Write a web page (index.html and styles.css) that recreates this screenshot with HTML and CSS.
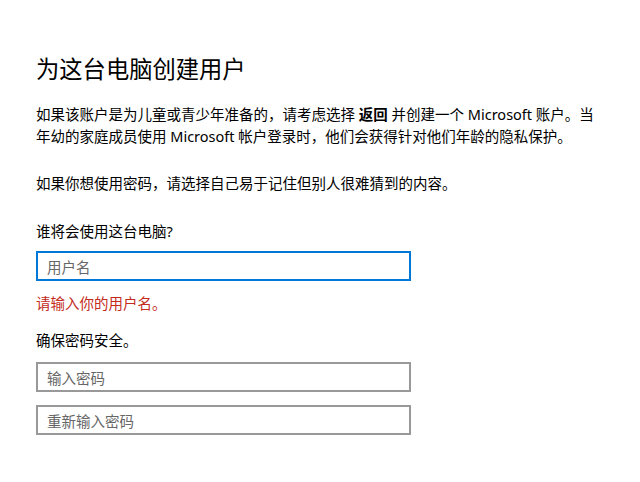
FILE: index.html
```html
<!DOCTYPE html>
<html lang="zh-CN">
<head>
<meta charset="utf-8">
<title>为这台电脑创建用户</title>
<link rel="stylesheet" href="styles.css">
</head>
<body>
<main class="page">
  <h1 class="title">为这台电脑创建用户</h1>
  <p class="text intro">如果该账户是为儿童或青少年准备的，请考虑选择 <b>返回</b> 并创建一个 Microsoft 账户。当年幼的家庭成员使用 Microsoft 帐户登录时，他们会获得针对他们年龄的隐私保护。</p>
  <p class="text hint">如果你想使用密码，请选择自己易于记住但别人很难猜到的内容。</p>
  <p class="text label">谁将会使用这台电脑?</p>
  <div class="field field-active"><span class="placeholder">用户名</span></div>
  <p class="text error">请输入你的用户名。</p>
  <p class="text label2">确保密码安全。</p>
  <div class="field field-pw"><span class="placeholder">输入密码</span></div>
  <div class="field field-pw2"><span class="placeholder">重新输入密码</span></div>
</main>
</body>
</html>
```

FILE: styles.css
```css
html, body {
  margin: 0;
  padding: 0;
  background: #ffffff;
}
body {
  font-family: "Noto Sans", "Noto Sans CJK SC", sans-serif;
  color: #000000;
}
.page {
  display: flex;
  flex-direction: column;
  align-items: flex-start;
  padding: 54px 0 0 36px;
  width: 566px;
}
.title {
  margin: 0;
  font-weight: 400;
  font-size: 23.3px;
  line-height: 30px;
  color: #000;
}
.text {
  margin: 0;
  font-size: 14.5px;
  line-height: 22px;
}
.text b {
  font-weight: 700;
}
.intro {
  margin-top: 19px;
}
.hint {
  margin-top: 25px;
}
.label {
  margin-top: 26px;
}
.field {
  box-sizing: border-box;
  width: 375px;
  height: 30px;
  border: 2px solid #999999;
  display: flex;
  align-items: center;
  padding-left: 9px;
  background: #fff;
}
.field-active {
  border-color: #0078d7;
  margin-top: 9px;
}
.placeholder {
  font-size: 14.5px;
  color: #666666;
}
.error {
  margin-top: 11px;
  color: #c42b1c;
}
.label2 {
  margin-top: 15px;
}
.field-pw {
  margin-top: 11px;
}
.field-pw2 {
  margin-top: 13px;
}
```
